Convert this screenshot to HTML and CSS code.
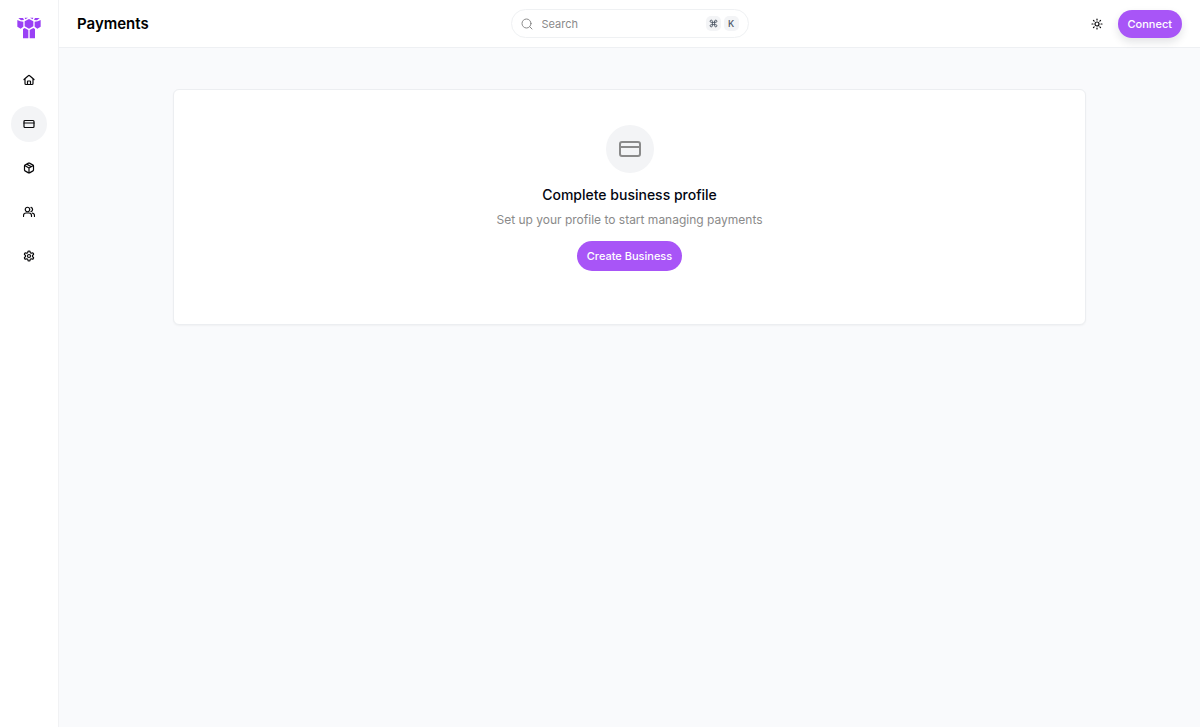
FILE: index.html
```html
<!DOCTYPE html>
<html lang="en">
<head>
<meta charset="utf-8">
<meta name="viewport" content="width=device-width, initial-scale=1">
<title>Payments</title>
<link rel="stylesheet" href="styles.css">
</head>
<body>
<div class="app">
  <aside class="sidebar">
    <a class="logo" href="#" aria-label="Home page">
      <svg viewBox="0 0 72 66" fill="currentColor">
        <path d="M36 6l13 7v15l-13 7-13-7V13z"/>
        <path d="M1 9l9 4 9 1v15l-8 6-10-6z"/>
        <path d="M71 9l-9 4-9 1v15l8 6 10-6z"/>
        <path d="M4 3h14l3 6-9 1zM68 3H54l-3 6 9 1zM23 2h10l-8 5zM49 2H39l8 5z"/>
        <path d="M18 36l5-3 11 6v25H18zM54 36l-5-3-11 6v25h16z"/>
      </svg>
    </a>
    <nav class="nav" aria-label="Main">
      <a class="nav-item" href="#" aria-label="Home"><svg class="icon" viewBox="0 0 24 24"><path d="M2 11l8.600-7.500a2 2 0 0 1 2.800 0L22 11M4 9.500V19a2 2 0 0 0 2 2h12a2 2 0 0 0 2-2V9.500M9 21v-6a1 1 0 0 1 1-1h4a1 1 0 0 1 1 1v6"/></svg></a>
      <a class="nav-item active" href="#" aria-label="Payments" aria-current="page"><svg class="icon" viewBox="0 0 24 24"><rect x="2" y="5" width="20" height="14" rx="2"/><path d="M2 10h20"/></svg></a>
      <a class="nav-item" href="#" aria-label="Products"><svg class="icon" viewBox="0 0 24 24"><path d="M11 21.730a2 2 0 0 0 2 0l7-4A2 2 0 0 0 21 16V8a2 2 0 0 0-1-1.730l-7-4a2 2 0 0 0-2 0l-7 4A2 2 0 0 0 3 8v8a2 2 0 0 0 1 1.730zM12 22V12M3.300 7 12 12l8.700-5M7.500 4.270l9 5.150"/></svg></a>
      <a class="nav-item" href="#" aria-label="Customers"><svg class="icon" viewBox="0 0 24 24"><path d="M1 21v-2a5 5 0 0 1 5-5h6a5 5 0 0 1 5 5v2"/><circle cx="9" cy="7" r="4.500"/><path d="M23 21v-2a5 5 0 0 0-4-4.800M16 2.700a4.500 4.500 0 0 1 0 8.600"/></svg></a>
      <a class="nav-item" href="#" aria-label="Settings"><svg class="icon" viewBox="0 0 24 24"><path d="M12.220 2h-.440a2 2 0 0 0-2 2v.180a2 2 0 0 1-1 1.730l-.430.250a2 2 0 0 1-2 0l-.150-.080a2 2 0 0 0-2.730.730l-.220.380a2 2 0 0 0 .730 2.730l.150.100a2 2 0 0 1 1 1.720v.510a2 2 0 0 1-1 1.740l-.150.090a2 2 0 0 0-.730 2.730l.220.380a2 2 0 0 0 2.730.730l.150-.080a2 2 0 0 1 2 0l.430.250a2 2 0 0 1 1 1.730V20a2 2 0 0 0 2 2h.440a2 2 0 0 0 2-2v-.180a2 2 0 0 1 1-1.730l.430-.250a2 2 0 0 1 2 0l.150.080a2 2 0 0 0 2.730-.730l.220-.390a2 2 0 0 0-.730-2.730l-.150-.080a2 2 0 0 1-1-1.740v-.500a2 2 0 0 1 1-1.740l.150-.090a2 2 0 0 0 .730-2.730l-.220-.380a2 2 0 0 0-2.730-.730l-.150.080a2 2 0 0 1-2 0l-.430-.250a2 2 0 0 1-1-1.730V4a2 2 0 0 0-2-2z"/><circle cx="12" cy="12" r="3"/></svg></a>
    </nav>
  </aside>
  <div class="content">
    <header class="topbar">
      <h1 class="title">Payments</h1>
      <label class="search">
        <svg class="icon thin" viewBox="0 0 24 24"><circle cx="11" cy="11" r="9"/><path d="m22 22-4.500-4.500"/></svg>
        <input class="search-input" type="search" placeholder="Search" aria-label="Search">
        <kbd class="key"><svg class="key-icon" viewBox="0 0 24 24"><path d="M15 6v12a3 3 0 1 0 3-3H6a3 3 0 1 0 3 3V6a3 3 0 1 0-3 3h12a3 3 0 1 0-3-3"/></svg></kbd>
        <kbd class="key">K</kbd>
      </label>
      <div class="actions">
        <button class="theme" type="button" aria-label="Toggle theme"><svg class="icon" viewBox="0 0 24 24"><circle cx="12" cy="12" r="4"/><path d="M12 2v2M12 20v2M4.900 4.900l1.400 1.400M17.700 17.700l1.400 1.400M2 12h2M20 12h2M6.300 17.700l-1.400 1.400M19.100 4.900l-1.400 1.400"/></svg></button>
        <button class="button raised" type="button">Connect</button>
      </div>
    </header>
    <main class="main">
      <section class="card">
        <div class="badge"><svg class="badge-icon" viewBox="0 0 24 24"><rect x="2" y="5" width="20" height="14" rx="2"/><path d="M2 10h20"/></svg></div>
        <h2 class="card-title">Complete business profile</h2>
        <p class="card-text">Set up your profile to start managing payments</p>
        <button class="button large" type="button">Create Business</button>
      </section>
    </main>
  </div>
</div>
</body>
</html>
```
FILE: styles.css
```css
* { box-sizing: border-box; }
body {
  margin: 0;
  font-family: Inter, "Liberation Sans", sans-serif;
  color: #030712;
  background: #f9fafc;
}
button, input { font: inherit; }
svg { display: block; flex: none; }
.app { display: flex; min-height: 100vh; }
.sidebar {
  flex: none;
  width: 59px;
  padding-top: 17px;
  display: flex;
  flex-direction: column;
  align-items: center;
  gap: 23px;
  background: #fff;
  border-right: 1px solid #f1f2f4;
}
.logo { color: #9a40f5; }
.logo svg { width: 24px; height: 22px; }
.nav { display: flex; flex-direction: column; gap: 8px; }
.nav-item {
  width: 36px;
  height: 36px;
  display: grid;
  place-items: center;
  border-radius: 50%;
  color: #09090b;
}
.nav-item.active { background: #f3f4f6; }
.icon, .key-icon, .badge-icon {
  width: 12px;
  height: 12px;
  fill: none;
  stroke: currentColor;
  stroke-width: 2.4;
  stroke-linecap: round;
  stroke-linejoin: round;
}
.content { flex: 1; min-width: 0; }
.topbar {
  height: 48px;
  padding: 0 18px;
  display: grid;
  grid-template-columns: 1fr 238px 1fr;
  align-items: center;
  background: #fff;
  border-bottom: 1px solid #eef0f3;
}
.title { margin: 0; font-size: 15px; line-height: 20px; font-weight: 600; color: #000; }
.search {
  height: 29px;
  padding: 0 9px;
  display: flex;
  align-items: center;
  gap: 3px;
  border: 1px solid #eff1f3;
  border-radius: 15px;
  color: #8a8a8a;
}
.search-input {
  flex: 1;
  min-width: 0;
  padding: 0 0 0 6px;
  border: 0;
  outline: 0;
  background: none;
  color: #09090b;
  font-size: 11px;
}
.search-input::placeholder { color: #8a8a8a; opacity: 1; }
.key {
  width: 15px;
  height: 15px;
  display: grid;
  place-items: center;
  border-radius: 5px;
  background: #f3f4f6;
  color: #4b5563;
  font: 500 9px/15px Inter, "Liberation Sans", sans-serif;
}
.key-icon { width: 9px; height: 9px; }
.thin { stroke-width: 2; }
.actions { display: flex; align-items: center; justify-content: flex-end; gap: 9px; }
.theme {
  width: 24px;
  height: 24px;
  padding: 0;
  display: grid;
  place-items: center;
  border: 0;
  background: none;
  color: #09090b;
}
.button {
  height: 28px;
  padding: 0 10px;
  border: 0;
  border-radius: 15px;
  background: #a855f7;
  color: #fff;
  font-size: 11px;
  font-weight: 500;
}
.raised { box-shadow: 0 4px 8px rgba(17, 24, 39, 0.12); }
.large { height: 30px; }
.main { padding: 41px 24px; }
.card {
  max-width: 913px;
  margin: 0 auto;
  padding: 35px 24px 53px;
  display: flex;
  flex-direction: column;
  align-items: center;
  background: #fff;
  border: 1px solid #eceef1;
  border-radius: 6px;
  box-shadow: 0 1px 2px rgba(0, 0, 0, 0.04);
}
.badge {
  width: 48px;
  height: 48px;
  display: grid;
  place-items: center;
  border-radius: 50%;
  background: #f3f4f6;
  color: #8a8a8a;
}
.badge-icon { width: 24px; height: 24px; stroke-width: 2; }
.card-title { margin: 12px 0 6px; font-size: 14px; line-height: 20px; font-weight: 500; }
.card-text { margin: 0 0 12px; font-size: 12px; line-height: 18px; color: #8a8a8a; }
```
